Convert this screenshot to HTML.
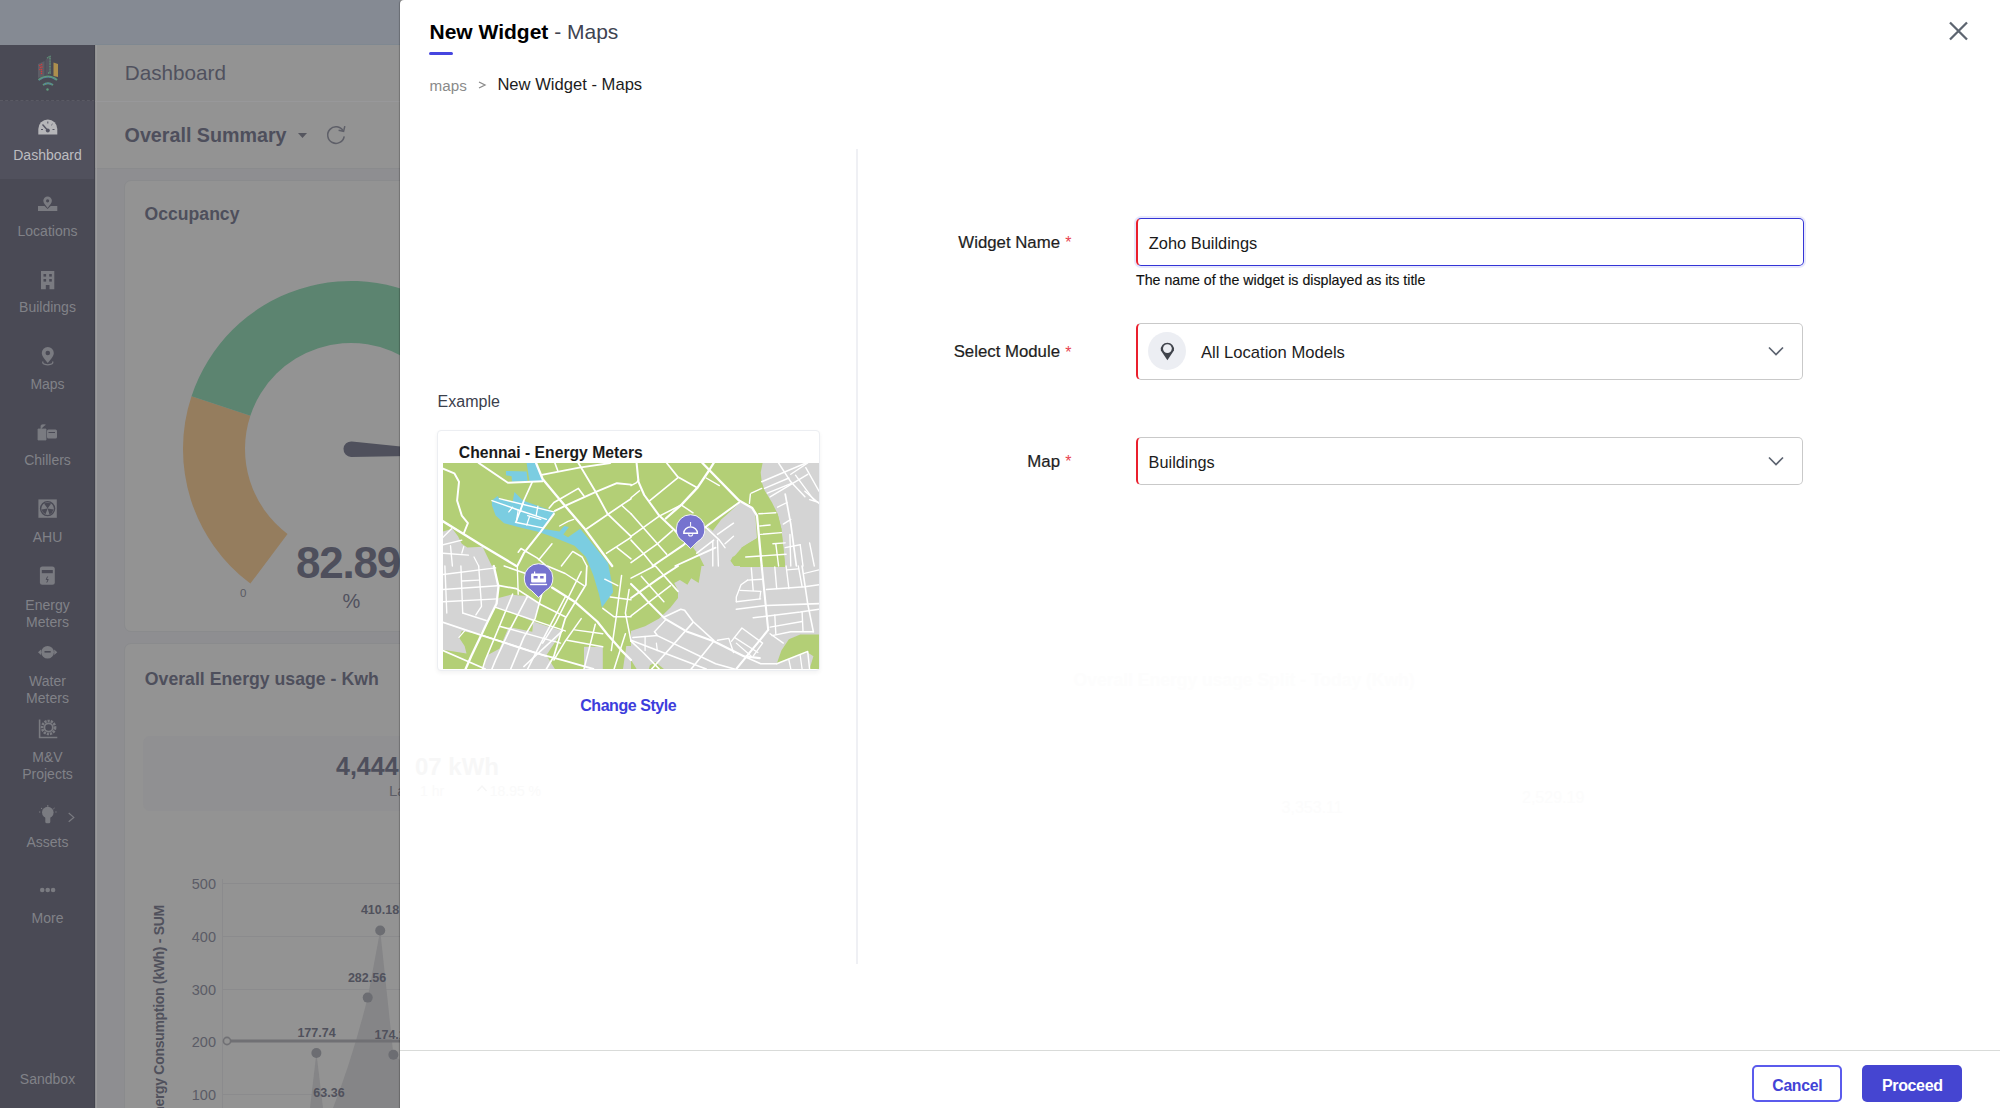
<!DOCTYPE html>
<html><head><meta charset="utf-8"><title>New Widget - Maps</title>
<style>
html,body{margin:0;padding:0;}
body{width:2000px;height:1108px;position:relative;overflow:hidden;background:#939393;font-family:"Liberation Sans", sans-serif;}
.t{position:absolute;white-space:nowrap;}
svg{position:absolute;overflow:visible;}
</style></head><body>

<div style="position:absolute;left:0px;top:0px;width:400px;height:45px;background:#858a93;"></div>
<div style="position:absolute;left:95px;top:44px;width:305px;height:1px;background:#7f8891;"></div>
<div style="position:absolute;left:0px;top:45px;width:95px;height:1063px;background:#4a4a55;"></div>
<div style="position:absolute;left:0px;top:45px;width:95px;height:56px;background:#4a4a55;border-bottom:1px dashed #5a5a64;box-sizing:border-box;"></div>
<div style="position:absolute;left:0px;top:101px;width:95px;height:78px;background:#51515d;"></div>
<div style="position:absolute;left:94px;top:45px;width:1px;height:1063px;background:#42434d;"></div>
<div style="position:absolute;left:95px;top:45px;width:305px;height:124px;background:#939393;"></div>
<div style="position:absolute;left:95px;top:101px;width:305px;height:1px;background:#98989a;"></div>
<div style="position:absolute;left:95px;top:168px;width:305px;height:1px;background:#8a8b8d;"></div>
<div style="position:absolute;left:95px;top:169px;width:305px;height:939px;background:#8e8e91;"></div>
<div style="position:absolute;left:96px;top:45px;width:1px;height:1063px;background:#9a9a9b;"></div>
<div style="position:absolute;left:124px;top:180px;width:300px;height:452px;background:#939393;border:1px solid #8a8b8d;border-radius:7px;box-sizing:border-box;"></div>
<div style="position:absolute;left:124px;top:643px;width:300px;height:500px;background:#939393;border:1px solid #8a8b8d;border-radius:7px;box-sizing:border-box;"></div>
<div style="position:absolute;left:143px;top:736px;width:280px;height:75px;background:#909092;border-radius:7px;"></div>
<div class="t" style="left:124.8px;top:63.0px;font-size:20.7px;line-height:20.7px;color:#50515e;font-weight:normal;">Dashboard</div>
<div class="t" style="left:124.6px;top:126.1px;font-size:19.7px;line-height:19.7px;color:#4e4f5c;font-weight:bold;">Overall Summary</div>
<svg style="left:296px;top:130px" width="14" height="10"><path d="M2 3 L11 3 L6.5 8 Z" fill="#55565f"/></svg>
<svg style="left:324px;top:123px" width="26" height="26"><path d="M19.2 7.9 A8.3 8.3 0 1 0 20.2 13.4" fill="none" stroke="#5e5f68" stroke-width="1.5"/><path d="M20.8 3.2 L19.6 8.3 L14.6 7.3" fill="none" stroke="#5e5f68" stroke-width="1.5"/></svg>
<div class="t" style="left:144.6px;top:206.3px;font-size:17.6px;line-height:17.6px;color:#4e4f5c;font-weight:bold;">Occupancy</div>
<svg style="left:0;top:0" width="400" height="1108"><path d="M250.36 583.52 A168 168 0 0 1 191.50 396.25 L250.36 415.72 A106 106 0 0 0 287.50 533.88Z" fill="#957d5e"/><path d="M191.50 396.25 A168 168 0 1 1 451.64 583.52 L414.50 533.88 A106 106 0 1 0 250.36 415.72Z" fill="#5c8470"/><path d="M351.84 441.41 L481.38 454.87 L351.16 456.99 A7.8 7.8 0 1 1 351.84 441.41 Z" fill="#4f505c"/></svg>
<div class="t" style="left:296.0px;top:540.8px;font-size:44px;line-height:44px;color:#4e4f5c;font-weight:bold;letter-spacing:-1.2px;">82.89</div>
<div class="t" style="left:51.5px;width:600px;text-align:center;top:591.1px;font-size:20px;line-height:20px;color:#50515e;font-weight:normal;">%</div>
<div class="t" style="left:-56.8px;width:600px;text-align:center;top:588.3px;font-size:11.5px;line-height:11.5px;color:#5a5b64;font-weight:normal;">0</div>
<div class="t" style="left:144.8px;top:670.6px;font-size:17.7px;line-height:17.7px;color:#4e4f5c;font-weight:bold;">Overall Energy usage - Kwh</div>
<div class="t" style="left:336.0px;top:754.1px;font-size:25px;line-height:25px;color:#4e4f5c;font-weight:bold;">4,444</div>
<div class="t" style="left:389.0px;top:783.3px;font-size:15px;line-height:15px;color:#5c5d66;font-weight:normal;">La</div>
<svg style="left:0;top:0" width="400" height="1108"><g stroke="#8b8b8d" stroke-width="1"><line x1="222.5" y1="879" x2="222.5" y2="1108"/><line x1="223" y1="883.5" x2="400" y2="883.5"/><line x1="223" y1="936.5" x2="400" y2="936.5"/><line x1="223" y1="989.5" x2="400" y2="989.5"/><line x1="223" y1="1094.5" x2="400" y2="1094.5"/></g><path d="M310 1108 L316.4 1053 L323 1108 Z" fill="#858587"/><path d="M333 1108 Q352 1060 367.7 997.6 L380.2 930.5 L393.4 1054.7 L400 1060 L400 1108 Z" fill="#858587"/><line x1="231" y1="1041" x2="400" y2="1041" stroke="#707074" stroke-width="3"/><circle cx="227" cy="1041" r="3.6" fill="#939393" stroke="#707074" stroke-width="1.6"/><g fill="#6c6d72"><circle cx="316.4" cy="1053" r="5"/><circle cx="367.7" cy="997.6" r="5"/><circle cx="380.2" cy="930.5" r="5"/><circle cx="393.4" cy="1054.7" r="5"/></g></svg>
<div class="t" style="right:1784.0px;top:876.7px;font-size:14.5px;line-height:14.5px;color:#5b5c66;font-weight:normal;">500</div>
<div class="t" style="right:1784.0px;top:929.7px;font-size:14.5px;line-height:14.5px;color:#5b5c66;font-weight:normal;">400</div>
<div class="t" style="right:1784.0px;top:982.7px;font-size:14.5px;line-height:14.5px;color:#5b5c66;font-weight:normal;">300</div>
<div class="t" style="right:1784.0px;top:1034.7px;font-size:14.5px;line-height:14.5px;color:#5b5c66;font-weight:normal;">200</div>
<div class="t" style="right:1784.0px;top:1087.7px;font-size:14.5px;line-height:14.5px;color:#5b5c66;font-weight:normal;">100</div>
<div class="t" style="left:16.5px;width:600px;text-align:center;top:1027.4px;font-size:12.5px;line-height:12.5px;color:#50515c;font-weight:bold;">177.74</div>
<div class="t" style="left:67.0px;width:600px;text-align:center;top:972.4px;font-size:12.5px;line-height:12.5px;color:#50515c;font-weight:bold;">282.56</div>
<div class="t" style="left:80.0px;width:600px;text-align:center;top:904.4px;font-size:12.5px;line-height:12.5px;color:#50515c;font-weight:bold;">410.18</div>
<div class="t" style="left:374.5px;top:1029.4px;font-size:12.5px;line-height:12.5px;color:#50515c;font-weight:bold;">174.1</div>
<div class="t" style="left:29.0px;width:600px;text-align:center;top:1087.4px;font-size:12.5px;line-height:12.5px;color:#50515c;font-weight:bold;">63.36</div>
<div class="t" style="left:151px;top:905px;font-size:14px;line-height:16px;letter-spacing:-0.3px;color:#50515c;font-weight:bold;transform-origin:0 0;transform:rotate(-90deg) translate(-300px,0);width:300px;text-align:right;">Energy Consumption (kWh) - SUM</div>
<div class="t" style="left:-252.5px;width:600px;text-align:center;top:147.6px;font-size:14px;line-height:14px;color:#bdbdc0;font-weight:normal;">Dashboard</div>
<div class="t" style="left:-252.5px;width:600px;text-align:center;top:224.0px;font-size:14px;line-height:14px;color:#818288;font-weight:normal;">Locations</div>
<div class="t" style="left:-252.5px;width:600px;text-align:center;top:300.4px;font-size:14px;line-height:14px;color:#818288;font-weight:normal;">Buildings</div>
<div class="t" style="left:-252.5px;width:600px;text-align:center;top:376.8px;font-size:14px;line-height:14px;color:#818288;font-weight:normal;">Maps</div>
<div class="t" style="left:-252.5px;width:600px;text-align:center;top:453.2px;font-size:14px;line-height:14px;color:#818288;font-weight:normal;">Chillers</div>
<div class="t" style="left:-252.5px;width:600px;text-align:center;top:529.6px;font-size:14px;line-height:14px;color:#818288;font-weight:normal;">AHU</div>
<div class="t" style="left:-252.5px;width:600px;text-align:center;top:598.1px;font-size:14px;line-height:14px;color:#818288;font-weight:normal;">Energy</div>
<div class="t" style="left:-252.5px;width:600px;text-align:center;top:614.8px;font-size:14px;line-height:14px;color:#818288;font-weight:normal;">Meters</div>
<div class="t" style="left:-252.5px;width:600px;text-align:center;top:673.6px;font-size:14px;line-height:14px;color:#818288;font-weight:normal;">Water</div>
<div class="t" style="left:-252.5px;width:600px;text-align:center;top:690.6px;font-size:14px;line-height:14px;color:#818288;font-weight:normal;">Meters</div>
<div class="t" style="left:-252.5px;width:600px;text-align:center;top:750.2px;font-size:14px;line-height:14px;color:#818288;font-weight:normal;">M&amp;V</div>
<div class="t" style="left:-252.5px;width:600px;text-align:center;top:767.2px;font-size:14px;line-height:14px;color:#818288;font-weight:normal;">Projects</div>
<div class="t" style="left:-252.5px;width:600px;text-align:center;top:835.4px;font-size:14px;line-height:14px;color:#818288;font-weight:normal;">Assets</div>
<div class="t" style="left:-252.5px;width:600px;text-align:center;top:911.3px;font-size:14px;line-height:14px;color:#818288;font-weight:normal;">More</div>
<div class="t" style="left:-252.5px;width:600px;text-align:center;top:1071.6px;font-size:14px;line-height:14px;color:#818288;font-weight:normal;">Sandbox</div>
<svg style="left:0;top:0" width="95" height="1108"><g><path d="M38 64 L44.5 61 L44.5 76 L38 78 Z" fill="#5d5d66"/><g fill="#d33b3b"><circle cx="39.8" cy="65.5" r="0.8"/><circle cx="41.5" cy="64.5" r="0.8"/><circle cx="40.5" cy="67.5" r="0.8"/><circle cx="42" cy="67" r="0.8"/><circle cx="39.8" cy="69.5" r="0.8"/><circle cx="41.5" cy="69.5" r="0.8"/><circle cx="41.5" cy="71.5" r="0.8"/><circle cx="41.5" cy="73.5" r="0.8"/></g><path d="M45.5 60 L49 55.5 L51 56 L51 74 L45.5 75 Z" fill="#555560"/><path d="M47 58 L50 56.5 L50 73 L47.5 73" fill="none" stroke="#5f9b7b" stroke-width="1.3" stroke-dasharray="1 0.6"/><path d="M53.5 62.5 L58 64 L58 77 L53.5 76 Z" fill="#ad8f4e"/><path d="M38.5 80 Q48 73 57 80" fill="none" stroke="#5f9b7b" stroke-width="2"/><path d="M39.5 80 Q48 74.5 56 80" fill="none" stroke="#4b5fd0" stroke-width="0.9" stroke-dasharray="1 1.6"/><path d="M43 85 Q48 81.5 53 85" fill="none" stroke="#5f9b7b" stroke-width="1.8"/><path d="M44 84.5 Q48 82 52 84.5" fill="none" stroke="#4b5fd0" stroke-width="0.9" stroke-dasharray="1 1.4"/><circle cx="47.5" cy="89.5" r="1.2" fill="#5f9b7b"/></g><path d="M38.3 134.5 L38.3 129 A9.5 9.5 0 0 1 57.3 129 L57.3 134.5 Z" fill="#b6b6b9"/><circle cx="47.8" cy="130.5" r="2" fill="#555563"/><path d="M47.8 130.5 L42.5 124.5" stroke="#555563" stroke-width="1.4"/><path d="M47.8 121.5 V123.5 M41 129.5 H43 M52.5 129.5 H54.5 M52.5 124 L51.3 125.2" stroke="#555563" stroke-width="1"/><path d="M47.6 196.5 A4.3 4.3 0 0 1 51.9 200.8 C51.9 203 49.5 205.5 47.6 208 C45.7 205.5 43.3 203 43.3 200.8 A4.3 4.3 0 0 1 47.6 196.5 Z" fill="#7a7b81"/><circle cx="47.6" cy="200.8" r="1.6" fill="#4a4a55"/><path d="M38 206 H44.5 L47.6 209 L50.7 206 H57.3 V211 H38 Z" fill="#7a7b81"/><path d="M41 271 H54.3 V289.3 H49.5 V285 H45.8 V289.3 H41 Z" fill="#7a7b81"/><g fill="#4a4a55"><rect x="43.5" y="274" width="2.6" height="2.6"/><rect x="49.2" y="274" width="2.6" height="2.6"/><rect x="43.5" y="279" width="2.6" height="2.6"/><rect x="49.2" y="279" width="2.6" height="2.6"/></g><path d="M47.8 347 A6 6 0 0 1 53.8 353 C53.8 356.5 50.5 359.5 47.8 363 C45.1 359.5 41.8 356.5 41.8 353 A6 6 0 0 1 47.8 347 Z" fill="#7a7b81"/><circle cx="47.8" cy="353" r="2.3" fill="#4a4a55"/><path d="M43 361.5 Q41.5 364.5 47.8 364.8 Q54 364.5 52.6 361.5" fill="none" stroke="#7a7b81" stroke-width="1.3"/><path d="M38 429 H46 V440 H38 Z M41 429 V426 Q41 424.8 42.5 424.8 H45.5" fill="#7a7b81" stroke="#7a7b81" stroke-width="0.8"/><rect x="47" y="429.5" width="10" height="9" rx="1.5" fill="#7a7b81"/><path d="M48.5 432.5 H55" stroke="#4a4a55" stroke-width="1"/><rect x="38.4" y="499.4" width="18.4" height="18.4" fill="#7a7b81"/><circle cx="47.6" cy="508.6" r="7" fill="none" stroke="#4a4a55" stroke-width="1.4"/><path d="M47.6 508.6 L44 503.5 Q47.6 502 51.2 503.5 Z M47.6 508.6 L53.6 509.5 Q52.5 513 49.5 514.5 Z M47.6 508.6 L45.5 514.3 Q42 512.5 41.6 509.5 Z" fill="#4a4a55"/><rect x="39.9" y="566.5" width="14.9" height="18.3" rx="2.5" fill="#7a7b81"/><rect x="41.8" y="570" width="11" height="3.2" fill="#4a4a55"/><path d="M47.6 576.5 L46.2 579.5 H48.2 L46.8 582.5" fill="none" stroke="#4a4a55" stroke-width="1"/><circle cx="47.6" cy="652.2" r="6.3" fill="#7a7b81"/><path d="M38 652.2 L41 649.5 V655 Z M57.3 652.2 L54.2 649.5 V655 Z" fill="#7a7b81"/><rect x="44.5" y="651" width="6.2" height="1.6" fill="#4a4a55"/><path d="M39.6 719.4 V737.5 H57.3" fill="none" stroke="#7a7b81" stroke-width="1.6"/><circle cx="48.6" cy="727.5" r="6.5" fill="none" stroke="#7a7b81" stroke-width="2.6" stroke-dasharray="2.2 1"/><circle cx="48.6" cy="727.5" r="4.2" fill="none" stroke="#7a7b81" stroke-width="1.8"/><circle cx="47.8" cy="812.5" r="5.8" fill="#7a7b81"/><rect x="45.3" y="816" width="5" height="7.3" rx="1.5" fill="#7a7b81"/><path d="M47.8 805 V806.8 M41 808 L42.3 809 M54.6 808 L53.3 809 M39 812 H40.3 M56.6 812 H55.3" stroke="#7a7b81" stroke-width="1"/><path d="M68.7 813 L73.8 817.4 L68.7 821.8" fill="none" stroke="#7a7b81" stroke-width="1.2"/><g fill="#7a7b81"><circle cx="42.2" cy="890" r="2.3"/><circle cx="47.7" cy="890" r="2.3"/><circle cx="53.1" cy="890" r="2.3"/></g></svg>
<div style="position:absolute;left:400px;top:0px;width:1600px;height:1108px;background:#fff;border-top-left-radius:4px;box-shadow:-1px 0 1px rgba(0,0,0,0.22);"></div>
<div class="t" style="left:429.5px;top:21.2px;font-size:21px;line-height:21px;color:#000;"><b>New Widget</b><span style="color:#3f4451;"> - Maps</span></div>
<div style="position:absolute;left:429px;top:52px;width:24px;height:3px;background:#4646e0;border-radius:2px;"></div>
<div class="t" style="left:429.6px;top:78.1px;font-size:15.2px;line-height:15.2px;color:#8a8a8a;font-weight:normal;">maps</div>
<svg style="left:477px;top:80px" width="10" height="10"><path d="M2 2 L8 5 L2 8" fill="none" stroke="#8a8a8a" stroke-width="1.3"/></svg>
<div class="t" style="left:497.4px;top:77.1px;font-size:16.6px;line-height:16.6px;color:#1c1c1c;font-weight:normal;">New Widget - Maps</div>
<svg style="left:1946px;top:19px" width="24" height="24"><path d="M4 3.5 L21 20.5 M21 3.5 L4 20.5" stroke="#5d6570" stroke-width="2.3"/></svg>
<div style="position:absolute;left:856px;top:149px;width:2px;height:815px;background:#eff0f4;"></div>
<div class="t" style="left:437.6px;top:394.1px;font-size:16px;line-height:16px;color:#3b404c;font-weight:normal;">Example</div>
<div style="position:absolute;left:437px;top:430px;width:383px;height:241px;background:#fff;border:1px solid #eceef2;border-radius:4px;box-sizing:border-box;box-shadow:0 2px 4px rgba(0,0,0,0.05);"></div>
<div class="t" style="left:458.8px;top:444.5px;font-size:15.7px;line-height:15.7px;color:#1a1a1a;font-weight:bold;">Chennai - Energy Meters</div>
<svg style="left:443px;top:463px" width="376" height="206" viewBox="0 0 376 206"><defs><clipPath id="mc"><rect width="376" height="206"/></clipPath></defs><g clip-path="url(#mc)"><rect width="376" height="206" fill="#b3cf76"/><polygon fill="#d4d4d4" points="0.0,68.6 9.4,65.8 15.0,73.3 18.8,80.8 24.4,84.6 39.5,83.7 48.9,103.0 51.2,103.0 55.5,123.7 54.0,140.6 44.2,159.4 36.7,171.6 18.8,167.9 16.0,174.4 21.6,182.9 23.5,190.4 0.0,186.7"/><polygon fill="#d4d4d4" points="55.5,135.0 67.7,131.7 84.6,133.1 96.8,141.5 90.2,158.5 63.9,148.1 52.6,144.4"/><polygon fill="#d4d4d4" points="90.2,158.5 119.4,167.9 103.4,192.3 111.9,206.0 40.4,206.0 44.2,192.3 56.4,185.7 65.8,164.1 89.3,168.8"/><polygon fill="#d4d4d4" points="141.0,183.8 159.8,183.8 159.8,206.0 141.0,206.0"/><polygon fill="#d4d4d4" points="183.3,182.9 188.0,182.9 188.0,206.0 180.0,206.0"/><polygon fill="#d4d4d4" points="319.6,0.0 376.0,0.0 376.0,103.0 342.2,103.0 338.4,65.8 334.6,50.8 329.0,39.5 321.5,27.3 318.7,18.8 317.7,9.4"/><polygon fill="#d4d4d4" points="265.1,63.9 269.8,67.7 278.2,56.4 284.8,50.8 297.0,39.5 306.4,42.3 312.1,48.9 314.0,75.2 304.6,80.8 298.9,84.6 297.0,90.2 289.5,94.0 287.6,97.8 291.4,103.0 261.3,103.0 255.7,92.1 250.0,84.6"/><polygon fill="#d4d4d4" points="188.0,103.0 376.0,103.0 376.0,206.0 188.0,206.0"/><polygon fill="#b3cf76" points="188.0,103.0 258.5,103.0 255.7,119.9 248.2,115.2 244.4,121.8 236.9,117.1 231.2,119.9 235.0,127.4 235.0,135.0 227.5,144.4 216.2,155.6 202.1,163.2 188.0,167.9"/><polygon fill="#b3cf76" points="297.0,103.0 317.7,103.0 317.7,104.0 297.0,104.0"/><polygon fill="#b3cf76" points="333.7,200.8 338.4,187.6 345.9,176.3 357.2,171.6 376.0,171.6 376.0,206.0 366.6,206.0 370.4,193.2 364.7,189.5"/><polygon fill="#b3cf76" points="188.0,197.0 193.6,206.0 188.0,206.0"/><polygon fill="#b3cf76" points="206.8,202.6 212.4,198.9 220.9,206.0 205.9,206.0"/><polygon fill="#b3cf76" points="315.8,48.9 334.6,50.8 338.4,65.8 342.2,103.0 342.2,104.0 318.7,104.0 314.0,75.2"/><polygon fill="#b3cf76" points="287.6,97.8 298.9,84.6 314.0,75.2 316.0,103.0 291.4,103.0"/><polygon fill="#7bcde1" points="48.9,37.6 54.5,32.9 56.4,35.7 69.5,39.5 71.4,29.1 79.9,37.6 111.8,48.9 106.2,58.3 99.6,65.8 116.5,68.6 121.2,63.0 125.9,63.9 120.3,71.4 125.0,74.2 137.2,65.8 165.0,100.0 169.2,121.8 170.1,129.3 158.9,144.4 156.0,131.2 150.4,112.4 146.6,103.0 142.9,94.0 131.6,82.7 108.1,73.3 94.0,68.6 75.2,63.9 61.1,60.2 52.6,52.6 48.9,42.3"/><polygon fill="#7bcde1" points="83.6,0.0 93.0,0.0 99.6,17.9 86.5,17.9"/><polygon fill="#7bcde1" points="63.0,8.0 83.6,8.5 84.6,18.3 69.0,18.8 68.6,13.2 63.0,12.2"/><polyline fill="none" stroke="#fff" stroke-width="1.95" stroke-linejoin="round" stroke-linecap="round" points="35.7,0.0 64.9,19.7 99.6,18.3"/><polyline fill="none" stroke="#fff" stroke-width="1.95" stroke-linejoin="round" stroke-linecap="round" points="0.0,5.6 11.3,10.3 16.0,18.8 14.1,37.6 18.8,52.6 24.9,60.2 20.7,70.5"/><polyline fill="none" stroke="#fff" stroke-width="2.30" stroke-linejoin="round" stroke-linecap="round" points="0.0,58.3 39.5,82.7 73.3,103.0"/><polyline fill="none" stroke="#fff" stroke-width="2.30" stroke-linejoin="round" stroke-linecap="round" points="93.1,0.0 99.6,16.0 117.5,37.6 141.0,64.9 169.2,103.0"/><polyline fill="none" stroke="#fff" stroke-width="1.84" stroke-linejoin="round" stroke-linecap="round" points="98.7,11.8 136.3,4.7 167.3,0.0"/><polyline fill="none" stroke="#fff" stroke-width="1.61" stroke-linejoin="round" stroke-linecap="round" points="111.9,0.0 114.7,7.5"/><polyline fill="none" stroke="#fff" stroke-width="1.84" stroke-linejoin="round" stroke-linecap="round" points="135.4,0.0 152.3,28.2 164.5,50.8 188.0,73.3"/><polyline fill="none" stroke="#fff" stroke-width="1.61" stroke-linejoin="round" stroke-linecap="round" points="106.2,45.1 110.9,39.5 117.5,35.7 135.4,25.4 141.0,32.9"/><polyline fill="none" stroke="#fff" stroke-width="1.95" stroke-linejoin="round" stroke-linecap="round" points="111.9,47.9 123.1,42.3 152.3,29.1 173.9,20.2 188.0,21.6"/><polyline fill="none" stroke="#fff" stroke-width="1.61" stroke-linejoin="round" stroke-linecap="round" points="89.3,18.8 80.8,37.6 73.3,58.3"/><polyline fill="none" stroke="#fff" stroke-width="1.38" stroke-linejoin="round" stroke-linecap="round" points="48.9,37.6 75.2,47.0 103.4,56.4"/><polyline fill="none" stroke="#fff" stroke-width="1.38" stroke-linejoin="round" stroke-linecap="round" points="56.4,35.7 110.9,48.9"/><polyline fill="none" stroke="#fff" stroke-width="1.38" stroke-linejoin="round" stroke-linecap="round" points="72.4,59.2 99.6,64.9"/><polyline fill="none" stroke="#fff" stroke-width="1.26" stroke-linejoin="round" stroke-linecap="round" points="84.6,52.6 97.8,56.4"/><polyline fill="none" stroke="#fff" stroke-width="1.26" stroke-linejoin="round" stroke-linecap="round" points="94.9,43.2 93.1,52.6"/><polyline fill="none" stroke="#fff" stroke-width="1.26" stroke-linejoin="round" stroke-linecap="round" points="86.5,53.6 83.7,62.0"/><polyline fill="none" stroke="#fff" stroke-width="1.26" stroke-linejoin="round" stroke-linecap="round" points="75.2,47.0 73.3,59.2"/><polyline fill="none" stroke="#fff" stroke-width="1.26" stroke-linejoin="round" stroke-linecap="round" points="65.8,48.9 69.6,44.2"/><polyline fill="none" stroke="#fff" stroke-width="1.26" stroke-linejoin="round" stroke-linecap="round" points="80.8,38.5 77.1,48.9"/><polyline fill="none" stroke="#fff" stroke-width="2.07" stroke-linejoin="round" stroke-linecap="round" points="110.9,50.8 97.8,68.6 80.8,90.2 74.3,103.0"/><polyline fill="none" stroke="#fff" stroke-width="1.72" stroke-linejoin="round" stroke-linecap="round" points="143.8,65.8 179.5,41.4 188.0,35.7"/><polyline fill="none" stroke="#fff" stroke-width="1.61" stroke-linejoin="round" stroke-linecap="round" points="163.6,90.2 188.0,74.3"/><polyline fill="none" stroke="#fff" stroke-width="1.49" stroke-linejoin="round" stroke-linecap="round" points="173.9,84.6 188.0,95.9"/><polyline fill="none" stroke="#fff" stroke-width="1.49" stroke-linejoin="round" stroke-linecap="round" points="178.6,42.3 188.0,50.8"/><polyline fill="none" stroke="#fff" stroke-width="1.38" stroke-linejoin="round" stroke-linecap="round" points="116.6,63.0 125.0,58.3 130.7,56.4"/><polyline fill="none" stroke="#fff" stroke-width="1.49" stroke-linejoin="round" stroke-linecap="round" points="75.2,89.3 78.0,85.5 94.0,94.9 103.4,103.0"/><polyline fill="none" stroke="#fff" stroke-width="1.49" stroke-linejoin="round" stroke-linecap="round" points="95.9,96.8 109.0,80.8"/><polyline fill="none" stroke="#fff" stroke-width="1.49" stroke-linejoin="round" stroke-linecap="round" points="118.4,103.0 129.7,88.4 139.1,94.0 143.8,103.0"/><polyline fill="none" stroke="#fff" stroke-width="1.38" stroke-linejoin="round" stroke-linecap="round" points="0.0,74.3 8.5,65.8"/><polyline fill="none" stroke="#fff" stroke-width="1.38" stroke-linejoin="round" stroke-linecap="round" points="0.0,81.8 18.8,77.1"/><polyline fill="none" stroke="#fff" stroke-width="1.38" stroke-linejoin="round" stroke-linecap="round" points="7.5,82.7 9.4,103.0"/><polyline fill="none" stroke="#fff" stroke-width="1.38" stroke-linejoin="round" stroke-linecap="round" points="0.0,90.2 25.4,92.1"/><polyline fill="none" stroke="#fff" stroke-width="1.26" stroke-linejoin="round" stroke-linecap="round" points="18.8,90.2 20.7,83.7"/><polyline fill="none" stroke="#fff" stroke-width="1.26" stroke-linejoin="round" stroke-linecap="round" points="31.0,94.0 35.7,103.0"/><polyline fill="none" stroke="#fff" stroke-width="2.07" stroke-linejoin="round" stroke-linecap="round" points="193.6,0.0 195.5,18.8 201.2,32.0 216.2,52.6 232.2,67.7 240.6,77.1"/><polyline fill="none" stroke="#fff" stroke-width="1.72" stroke-linejoin="round" stroke-linecap="round" points="223.7,0.0 235.0,14.1 253.8,24.4"/><polyline fill="none" stroke="#fff" stroke-width="1.49" stroke-linejoin="round" stroke-linecap="round" points="188.0,22.6 193.6,19.7 195.5,16.9"/><polyline fill="none" stroke="#fff" stroke-width="2.30" stroke-linejoin="round" stroke-linecap="round" points="259.4,0.0 296.1,37.6 309.3,45.1 314.0,52.6 318.7,103.0"/><polyline fill="none" stroke="#fff" stroke-width="2.30" stroke-linejoin="round" stroke-linecap="round" points="270.7,0.0 266.0,7.5 254.7,24.4 238.8,41.4 222.8,55.5"/><polyline fill="none" stroke="#fff" stroke-width="1.49" stroke-linejoin="round" stroke-linecap="round" points="188.0,34.8 196.5,27.7"/><polyline fill="none" stroke="#fff" stroke-width="1.61" stroke-linejoin="round" stroke-linecap="round" points="206.8,37.6 235.0,14.6"/><polyline fill="none" stroke="#fff" stroke-width="1.61" stroke-linejoin="round" stroke-linecap="round" points="188.0,73.3 216.2,53.1 238.8,41.8"/><polyline fill="none" stroke="#fff" stroke-width="1.61" stroke-linejoin="round" stroke-linecap="round" points="188.0,99.6 214.3,80.8 229.4,67.7"/><polyline fill="none" stroke="#fff" stroke-width="2.07" stroke-linejoin="round" stroke-linecap="round" points="209.6,103.0 240.6,81.8 265.1,62.0 296.1,39.5"/><polyline fill="none" stroke="#fff" stroke-width="1.72" stroke-linejoin="round" stroke-linecap="round" points="232.2,103.0 253.8,93.1 272.6,84.6"/><polyline fill="none" stroke="#fff" stroke-width="1.49" stroke-linejoin="round" stroke-linecap="round" points="274.5,71.4 290.5,60.2"/><polyline fill="none" stroke="#fff" stroke-width="1.38" stroke-linejoin="round" stroke-linecap="round" points="282.0,80.8 290.5,73.3"/><polyline fill="none" stroke="#fff" stroke-width="1.49" stroke-linejoin="round" stroke-linecap="round" points="253.8,90.2 270.7,77.1"/><polyline fill="none" stroke="#fff" stroke-width="1.61" stroke-linejoin="round" stroke-linecap="round" points="188.0,50.8 223.7,91.2"/><polyline fill="none" stroke="#fff" stroke-width="1.61" stroke-linejoin="round" stroke-linecap="round" points="188.0,77.1 200.2,90.2 210.6,103.0"/><polyline fill="none" stroke="#fff" stroke-width="1.49" stroke-linejoin="round" stroke-linecap="round" points="238.8,42.3 250.0,49.8"/><polyline fill="none" stroke="#fff" stroke-width="1.38" stroke-linejoin="round" stroke-linecap="round" points="263.2,15.0 276.4,22.6"/><polyline fill="none" stroke="#fff" stroke-width="1.49" stroke-linejoin="round" stroke-linecap="round" points="262.3,63.9 276.4,77.1 282.0,84.6"/><polyline fill="none" stroke="#fff" stroke-width="1.38" stroke-linejoin="round" stroke-linecap="round" points="269.8,78.0 269.8,103.0"/><polyline fill="none" stroke="#fff" stroke-width="1.38" stroke-linejoin="round" stroke-linecap="round" points="274.5,77.1 275.4,103.0"/><polyline fill="none" stroke="#fff" stroke-width="1.49" stroke-linejoin="round" stroke-linecap="round" points="318.7,18.8 362.8,0.0"/><polyline fill="none" stroke="#fff" stroke-width="1.38" stroke-linejoin="round" stroke-linecap="round" points="321.5,25.4 345.9,15.0"/><polyline fill="none" stroke="#fff" stroke-width="1.38" stroke-linejoin="round" stroke-linecap="round" points="324.3,30.1 347.8,20.7"/><polyline fill="none" stroke="#fff" stroke-width="1.49" stroke-linejoin="round" stroke-linecap="round" points="327.1,33.8 364.7,11.3"/><polyline fill="none" stroke="#fff" stroke-width="1.38" stroke-linejoin="round" stroke-linecap="round" points="347.8,11.3 364.7,0.0"/><polyline fill="none" stroke="#fff" stroke-width="1.38" stroke-linejoin="round" stroke-linecap="round" points="334.6,44.2 344.0,39.5"/><polyline fill="none" stroke="#fff" stroke-width="1.38" stroke-linejoin="round" stroke-linecap="round" points="340.3,61.1 347.8,56.4"/><polyline fill="none" stroke="#fff" stroke-width="1.38" stroke-linejoin="round" stroke-linecap="round" points="342.2,84.6 357.2,81.8"/><polyline fill="none" stroke="#fff" stroke-width="1.49" stroke-linejoin="round" stroke-linecap="round" points="335.6,0.0 347.8,18.8 361.9,33.8"/><polyline fill="none" stroke="#fff" stroke-width="1.38" stroke-linejoin="round" stroke-linecap="round" points="352.5,12.2 371.3,37.6"/><polyline fill="none" stroke="#fff" stroke-width="1.38" stroke-linejoin="round" stroke-linecap="round" points="362.8,4.7 376.0,28.2"/><polyline fill="none" stroke="#fff" stroke-width="1.72" stroke-linejoin="round" stroke-linecap="round" points="342.2,31.0 347.8,61.1 353.4,103.0"/><polyline fill="none" stroke="#fff" stroke-width="1.38" stroke-linejoin="round" stroke-linecap="round" points="361.9,28.2 376.0,40.4"/><polyline fill="none" stroke="#fff" stroke-width="1.38" stroke-linejoin="round" stroke-linecap="round" points="346.9,71.4 347.8,103.0"/><polyline fill="none" stroke="#fff" stroke-width="1.38" stroke-linejoin="round" stroke-linecap="round" points="357.2,81.8 360.0,103.0"/><polyline fill="none" stroke="#fff" stroke-width="1.38" stroke-linejoin="round" stroke-linecap="round" points="366.6,79.9 371.3,103.0"/><polyline fill="none" stroke="#fff" stroke-width="1.38" stroke-linejoin="round" stroke-linecap="round" points="366.6,36.7 376.0,39.5"/><polyline fill="none" stroke="#fff" stroke-width="1.38" stroke-linejoin="round" stroke-linecap="round" points="315.8,50.8 332.8,49.8"/><polyline fill="none" stroke="#fff" stroke-width="1.38" stroke-linejoin="round" stroke-linecap="round" points="316.8,63.0 327.1,62.0"/><polyline fill="none" stroke="#fff" stroke-width="1.38" stroke-linejoin="round" stroke-linecap="round" points="317.7,71.4 338.4,69.6"/><polyline fill="none" stroke="#fff" stroke-width="1.38" stroke-linejoin="round" stroke-linecap="round" points="302.7,94.0 343.1,91.2"/><polyline fill="none" stroke="#fff" stroke-width="1.38" stroke-linejoin="round" stroke-linecap="round" points="329.9,80.8 342.2,79.9"/><polyline fill="none" stroke="#fff" stroke-width="1.38" stroke-linejoin="round" stroke-linecap="round" points="332.8,80.8 335.6,103.0"/><polyline fill="none" stroke="#fff" stroke-width="1.38" stroke-linejoin="round" stroke-linecap="round" points="308.3,30.1 318.7,25.4"/><polyline fill="none" stroke="#fff" stroke-width="1.38" stroke-linejoin="round" stroke-linecap="round" points="307.4,31.0 306.4,40.4"/><polyline fill="none" stroke="#fff" stroke-width="1.38" stroke-linejoin="round" stroke-linecap="round" points="1.9,103.0 3.8,150.0"/><polyline fill="none" stroke="#fff" stroke-width="1.38" stroke-linejoin="round" stroke-linecap="round" points="17.9,103.0 19.7,150.0"/><polyline fill="none" stroke="#fff" stroke-width="1.38" stroke-linejoin="round" stroke-linecap="round" points="35.7,103.0 38.5,143.4 32.9,151.9"/><polyline fill="none" stroke="#fff" stroke-width="1.38" stroke-linejoin="round" stroke-linecap="round" points="0.0,111.5 52.6,104.9"/><polyline fill="none" stroke="#fff" stroke-width="1.38" stroke-linejoin="round" stroke-linecap="round" points="0.0,126.5 54.5,122.7"/><polyline fill="none" stroke="#fff" stroke-width="1.38" stroke-linejoin="round" stroke-linecap="round" points="0.0,138.7 54.5,135.9"/><polyline fill="none" stroke="#fff" stroke-width="1.38" stroke-linejoin="round" stroke-linecap="round" points="19.7,150.0 43.2,157.5"/><polyline fill="none" stroke="#fff" stroke-width="1.26" stroke-linejoin="round" stroke-linecap="round" points="18.8,118.0 35.7,117.1"/><polyline fill="none" stroke="#fff" stroke-width="2.30" stroke-linejoin="round" stroke-linecap="round" points="50.8,103.0 55.5,123.7 53.6,140.6 44.2,159.4 28.2,193.2 22.6,206.0"/><polyline fill="none" stroke="#fff" stroke-width="1.84" stroke-linejoin="round" stroke-linecap="round" points="0.0,159.4 39.5,172.6 94.0,190.4 122.2,197.9 150.4,206.0"/><polyline fill="none" stroke="#fff" stroke-width="1.61" stroke-linejoin="round" stroke-linecap="round" points="0.0,187.6 42.3,206.0"/><polyline fill="none" stroke="#fff" stroke-width="1.72" stroke-linejoin="round" stroke-linecap="round" points="56.4,122.7 73.3,125.6 97.8,141.5 122.2,153.8"/><polyline fill="none" stroke="#fff" stroke-width="1.49" stroke-linejoin="round" stroke-linecap="round" points="61.1,103.0 82.7,110.5"/><polyline fill="none" stroke="#fff" stroke-width="1.38" stroke-linejoin="round" stroke-linecap="round" points="74.3,103.0 75.2,131.2"/><polyline fill="none" stroke="#fff" stroke-width="1.49" stroke-linejoin="round" stroke-linecap="round" points="104.3,103.0 122.2,110.5 141.0,122.7"/><polyline fill="none" stroke="#fff" stroke-width="2.30" stroke-linejoin="round" stroke-linecap="round" points="109.0,124.6 131.6,138.7 154.2,158.5 165.4,172.6 178.6,187.6 188.0,197.0"/><polyline fill="none" stroke="#fff" stroke-width="1.61" stroke-linejoin="round" stroke-linecap="round" points="98.7,131.2 92.1,155.6 80.8,174.4 67.7,206.0"/><polyline fill="none" stroke="#fff" stroke-width="1.61" stroke-linejoin="round" stroke-linecap="round" points="84.6,133.1 65.8,168.8 52.6,197.0 48.9,206.0"/><polyline fill="none" stroke="#fff" stroke-width="1.61" stroke-linejoin="round" stroke-linecap="round" points="69.6,131.2 56.4,163.2 42.3,197.0 39.5,206.0"/><polyline fill="none" stroke="#fff" stroke-width="1.61" stroke-linejoin="round" stroke-linecap="round" points="122.2,134.0 94.0,187.6 84.6,206.0"/><polyline fill="none" stroke="#fff" stroke-width="1.49" stroke-linejoin="round" stroke-linecap="round" points="138.2,108.6 112.8,159.4 99.6,180.1"/><polyline fill="none" stroke="#fff" stroke-width="1.49" stroke-linejoin="round" stroke-linecap="round" points="119.4,167.9 94.0,191.4 80.8,203.6"/><polyline fill="none" stroke="#fff" stroke-width="1.72" stroke-linejoin="round" stroke-linecap="round" points="143.8,103.0 142.9,121.8 122.2,155.6 110.9,193.2 103.4,206.0"/><polyline fill="none" stroke="#fff" stroke-width="1.49" stroke-linejoin="round" stroke-linecap="round" points="138.2,155.6 122.2,178.2 110.9,197.0"/><polyline fill="none" stroke="#fff" stroke-width="1.49" stroke-linejoin="round" stroke-linecap="round" points="152.3,161.3 141.0,206.0"/><polyline fill="none" stroke="#fff" stroke-width="1.49" stroke-linejoin="round" stroke-linecap="round" points="182.4,170.7 171.1,206.0"/><polyline fill="none" stroke="#fff" stroke-width="1.49" stroke-linejoin="round" stroke-linecap="round" points="52.6,144.4 122.2,167.9"/><polyline fill="none" stroke="#fff" stroke-width="1.49" stroke-linejoin="round" stroke-linecap="round" points="56.4,163.2 117.5,180.1"/><polyline fill="none" stroke="#fff" stroke-width="1.49" stroke-linejoin="round" stroke-linecap="round" points="40.4,172.6 103.4,193.2"/><polyline fill="none" stroke="#fff" stroke-width="1.49" stroke-linejoin="round" stroke-linecap="round" points="159.8,145.3 171.1,153.8 188.0,153.8"/><polyline fill="none" stroke="#fff" stroke-width="1.49" stroke-linejoin="round" stroke-linecap="round" points="178.6,112.4 173.0,155.6 168.3,187.6"/><polyline fill="none" stroke="#fff" stroke-width="1.38" stroke-linejoin="round" stroke-linecap="round" points="167.3,134.0 188.0,136.8"/><polyline fill="none" stroke="#fff" stroke-width="1.38" stroke-linejoin="round" stroke-linecap="round" points="161.7,116.2 174.8,122.7"/><polyline fill="none" stroke="#fff" stroke-width="1.49" stroke-linejoin="round" stroke-linecap="round" points="186.1,126.5 182.4,150.0 188.0,178.2"/><polyline fill="none" stroke="#fff" stroke-width="1.26" stroke-linejoin="round" stroke-linecap="round" points="16.0,174.4 21.6,167.9"/><polyline fill="none" stroke="#fff" stroke-width="1.38" stroke-linejoin="round" stroke-linecap="round" points="131.6,166.9 159.8,170.7"/><polyline fill="none" stroke="#fff" stroke-width="1.38" stroke-linejoin="round" stroke-linecap="round" points="124.1,177.3 159.8,183.8"/><polyline fill="none" stroke="#fff" stroke-width="1.49" stroke-linejoin="round" stroke-linecap="round" points="188.0,115.2 211.5,103.0"/><polyline fill="none" stroke="#fff" stroke-width="2.07" stroke-linejoin="round" stroke-linecap="round" points="188.0,135.0 216.2,115.2 235.0,103.0"/><polyline fill="none" stroke="#fff" stroke-width="1.49" stroke-linejoin="round" stroke-linecap="round" points="188.0,152.8 227.5,122.7"/><polyline fill="none" stroke="#fff" stroke-width="1.49" stroke-linejoin="round" stroke-linecap="round" points="198.3,113.3 220.9,138.7"/><polyline fill="none" stroke="#fff" stroke-width="1.61" stroke-linejoin="round" stroke-linecap="round" points="212.4,103.0 220.0,111.5 235.0,128.4"/><polyline fill="none" stroke="#fff" stroke-width="2.07" stroke-linejoin="round" stroke-linecap="round" points="188.0,120.9 196.5,129.3 206.8,140.6 221.8,155.6 244.4,168.8 270.7,178.2 300.8,193.2 316.8,195.1"/><polyline fill="none" stroke="#fff" stroke-width="1.61" stroke-linejoin="round" stroke-linecap="round" points="221.8,153.8 237.8,146.2 241.6,147.2 250.0,158.5 270.7,177.3"/><polyline fill="none" stroke="#fff" stroke-width="1.38" stroke-linejoin="round" stroke-linecap="round" points="211.5,168.8 222.8,156.6"/><polyline fill="none" stroke="#fff" stroke-width="1.61" stroke-linejoin="round" stroke-linecap="round" points="211.5,168.8 214.3,172.6 272.6,200.8 291.4,206.0"/><polyline fill="none" stroke="#fff" stroke-width="1.49" stroke-linejoin="round" stroke-linecap="round" points="189.9,174.4 214.3,172.6"/><polyline fill="none" stroke="#fff" stroke-width="1.61" stroke-linejoin="round" stroke-linecap="round" points="188.0,177.3 263.2,206.0"/><polyline fill="none" stroke="#fff" stroke-width="1.61" stroke-linejoin="round" stroke-linecap="round" points="188.0,178.2 200.2,189.5 216.2,206.0"/><polyline fill="none" stroke="#fff" stroke-width="1.26" stroke-linejoin="round" stroke-linecap="round" points="202.1,173.5 202.1,187.6"/><polyline fill="none" stroke="#fff" stroke-width="1.26" stroke-linejoin="round" stroke-linecap="round" points="213.4,180.1 214.3,187.6"/><polyline fill="none" stroke="#fff" stroke-width="1.61" stroke-linejoin="round" stroke-linecap="round" points="250.0,159.4 208.7,206.0"/><polyline fill="none" stroke="#fff" stroke-width="1.61" stroke-linejoin="round" stroke-linecap="round" points="270.7,178.2 248.2,206.0"/><polyline fill="none" stroke="#fff" stroke-width="1.38" stroke-linejoin="round" stroke-linecap="round" points="274.5,177.3 285.8,175.4 290.5,189.5"/><polyline fill="none" stroke="#fff" stroke-width="1.38" stroke-linejoin="round" stroke-linecap="round" points="288.6,178.2 298.9,165.0 319.6,180.1 310.2,193.2"/><polyline fill="none" stroke="#fff" stroke-width="1.26" stroke-linejoin="round" stroke-linecap="round" points="291.4,174.4 314.9,189.5"/><polyline fill="none" stroke="#fff" stroke-width="1.26" stroke-linejoin="round" stroke-linecap="round" points="293.3,180.1 308.3,193.2"/><polyline fill="none" stroke="#fff" stroke-width="2.07" stroke-linejoin="round" stroke-linecap="round" points="325.2,166.9 293.3,206.0"/><polyline fill="none" stroke="#fff" stroke-width="1.38" stroke-linejoin="round" stroke-linecap="round" points="327.1,170.7 340.3,180.1"/><polyline fill="none" stroke="#fff" stroke-width="1.38" stroke-linejoin="round" stroke-linecap="round" points="308.3,104.9 310.2,127.4"/><polyline fill="none" stroke="#fff" stroke-width="2.07" stroke-linejoin="round" stroke-linecap="round" points="318.7,103.0 325.2,166.9"/><polyline fill="none" stroke="#fff" stroke-width="1.38" stroke-linejoin="round" stroke-linecap="round" points="331.8,103.9 333.7,125.6"/><polyline fill="none" stroke="#fff" stroke-width="1.38" stroke-linejoin="round" stroke-linecap="round" points="343.1,103.0 345.9,125.6"/><polyline fill="none" stroke="#fff" stroke-width="1.38" stroke-linejoin="round" stroke-linecap="round" points="355.3,103.0 359.1,123.7"/><polyline fill="none" stroke="#fff" stroke-width="1.61" stroke-linejoin="round" stroke-linecap="round" points="359.1,103.0 364.7,140.6 370.4,168.8"/><polyline fill="none" stroke="#fff" stroke-width="1.38" stroke-linejoin="round" stroke-linecap="round" points="304.6,117.1 319.6,116.2"/><polyline fill="none" stroke="#fff" stroke-width="1.38" stroke-linejoin="round" stroke-linecap="round" points="297.0,127.4 317.7,128.4"/><polyline fill="none" stroke="#fff" stroke-width="1.38" stroke-linejoin="round" stroke-linecap="round" points="293.3,138.7 317.7,135.9"/><polyline fill="none" stroke="#fff" stroke-width="1.61" stroke-linejoin="round" stroke-linecap="round" points="293.3,146.2 323.4,142.5 376.0,140.6"/><polyline fill="none" stroke="#fff" stroke-width="1.49" stroke-linejoin="round" stroke-linecap="round" points="310.2,154.7 357.2,149.1 376.0,146.2"/><polyline fill="none" stroke="#fff" stroke-width="1.38" stroke-linejoin="round" stroke-linecap="round" points="327.1,164.1 359.1,158.5"/><polyline fill="none" stroke="#fff" stroke-width="1.38" stroke-linejoin="round" stroke-linecap="round" points="329.0,172.6 347.8,168.8 370.4,168.8"/><polyline fill="none" stroke="#fff" stroke-width="1.38" stroke-linejoin="round" stroke-linecap="round" points="323.4,126.5 361.9,123.7 376.0,121.8"/><polyline fill="none" stroke="#fff" stroke-width="1.26" stroke-linejoin="round" stroke-linecap="round" points="344.0,106.8 355.3,105.8"/><polyline fill="none" stroke="#fff" stroke-width="1.26" stroke-linejoin="round" stroke-linecap="round" points="361.0,110.5 376.0,106.8"/><polyline fill="none" stroke="#fff" stroke-width="1.38" stroke-linejoin="round" stroke-linecap="round" points="304.6,117.1 298.0,121.8 293.3,134.0 293.3,138.7"/><polyline fill="none" stroke="#fff" stroke-width="1.26" stroke-linejoin="round" stroke-linecap="round" points="317.7,128.4 316.8,135.9"/><polyline fill="none" stroke="#fff" stroke-width="1.38" stroke-linejoin="round" stroke-linecap="round" points="331.8,151.9 332.8,170.7"/><polyline fill="none" stroke="#fff" stroke-width="1.38" stroke-linejoin="round" stroke-linecap="round" points="359.1,149.1 360.0,167.9"/><polyline fill="none" stroke="#fff" stroke-width="1.49" stroke-linejoin="round" stroke-linecap="round" points="333.7,200.8 364.7,188.5 366.6,206.0"/><polyline fill="none" stroke="#fff" stroke-width="1.26" stroke-linejoin="round" stroke-linecap="round" points="345.9,197.0 347.8,206.0"/><polyline fill="none" stroke="#fff" stroke-width="1.26" stroke-linejoin="round" stroke-linecap="round" points="357.2,192.3 359.1,206.0"/><polyline fill="none" stroke="#fff" stroke-width="1.49" stroke-linejoin="round" stroke-linecap="round" points="300.8,193.2 317.7,200.8 333.7,200.8"/></g><g transform="translate(247.6,66)"><path d="M-14.3 0 A14.3 14.3 0 1 1 14.3 0 A14.3 14.3 0 0 1 7 12.6 L0 19.5 L-7 12.6 A14.3 14.3 0 0 1 -14.3 0Z" fill="#7673cf" stroke="#fff" stroke-width="0.9"/><path d="M-6.8 4.2 A6.8 6.3 0 0 1 6.8 4.2 Z" fill="none" stroke="#fff" stroke-width="1.4"/><line x1="0" y1="-7" x2="0" y2="-2.8" stroke="#fff" stroke-width="1"/><path d="M-2 5.2 A2 1.8 0 0 0 2 5.2" fill="none" stroke="#fff" stroke-width="1.2"/></g><g transform="translate(95.6,115)"><path d="M-14.3 0 A14.3 14.3 0 1 1 14.3 0 A14.3 14.3 0 0 1 7 12.6 L0 19.5 L-7 12.6 A14.3 14.3 0 0 1 -14.3 0Z" fill="#7673cf" stroke="#fff" stroke-width="0.9"/><rect x="-7.5" y="-4.5" width="15" height="9" rx="1" fill="#fff"/><rect x="-5" y="-2" width="4" height="2.5" fill="#7a72cc"/><rect x="1.5" y="-2" width="3.5" height="2.5" fill="#7a72cc"/><line x1="-8.5" y1="6.5" x2="8.5" y2="6.5" stroke="#fff" stroke-width="1.4"/><line x1="-4" y1="-6.5" x2="-4" y2="-4" stroke="#fff" stroke-width="1.2"/></g></svg>
<div class="t" style="left:328.2px;width:600px;text-align:center;top:698.2px;font-size:16px;line-height:16px;color:#3d3ddc;font-weight:bold;letter-spacing:-0.45px;">Change Style</div>
<div class="t" style="left:1073.6px;top:671.5px;font-size:17.5px;line-height:17.5px;color:#fdfdfd;font-weight:bold;">Overall Energy usage Split - Today (Kwh)</div>
<div class="t" style="left:1281.6px;top:800.0px;font-size:16px;line-height:16px;color:#fcfcfc;font-weight:normal;">3,353.11</div>
<div class="t" style="left:1522.0px;top:790.2px;font-size:16px;line-height:16px;color:#fcfcfc;font-weight:normal;">2,529.19</div>
<div class="t" style="left:415.0px;top:755.0px;font-size:24px;line-height:24px;color:#f7f7f7;font-weight:bold;">07 kWh</div>
<div class="t" style="left:420.0px;top:784.1px;font-size:14px;line-height:14px;color:#fafafa;font-weight:normal;">1 hr</div>
<svg style="left:476px;top:783px" width="12" height="10"><path d="M1.5 8 L6 3 L10.5 8" fill="none" stroke="#f6f6f6" stroke-width="1.5"/></svg>
<div class="t" style="left:489.7px;top:784.1px;font-size:14px;line-height:14px;color:#fafafa;font-weight:normal;">18.95 %</div>
<div class="t" style="right:940.0px;top:235.1px;font-size:16.8px;line-height:16.8px;color:#1e1e1e;font-weight:normal;-webkit-text-stroke:0.2px #1e1e1e;">Widget Name</div>
<div class="t" style="right:940.0px;top:344.2px;font-size:16.8px;line-height:16.8px;color:#1e1e1e;font-weight:normal;-webkit-text-stroke:0.2px #1e1e1e;">Select Module</div>
<div class="t" style="right:940.0px;top:454.1px;font-size:16.8px;line-height:16.8px;color:#1e1e1e;font-weight:normal;-webkit-text-stroke:0.2px #1e1e1e;">Map</div>
<div class="t" style="left:1065.3px;top:235.0px;font-size:16px;line-height:16px;color:#e8434f;font-weight:normal;">*</div>
<div class="t" style="left:1065.3px;top:345.3px;font-size:16px;line-height:16px;color:#e8434f;font-weight:normal;">*</div>
<div class="t" style="left:1065.3px;top:454.3px;font-size:16px;line-height:16px;color:#e8434f;font-weight:normal;">*</div>
<div style="position:absolute;left:1136px;top:218px;width:668px;height:48px;border:1.6px solid #3434d6;border-left:2.5px solid #ea1f2d;border-radius:5px;box-sizing:border-box;box-shadow:0 0 0 2px rgba(70,80,230,0.13);"></div>
<div class="t" style="left:1148.8px;top:235.4px;font-size:16.4px;line-height:16.4px;color:#1a1a1a;font-weight:normal;">Zoho Buildings</div>
<div class="t" style="left:1136.0px;top:272.5px;font-size:14.2px;line-height:14.2px;color:#111;font-weight:normal;-webkit-text-stroke:0.15px #111;">The name of the widget is displayed as its title</div>
<div style="position:absolute;left:1136px;top:323px;width:667px;height:57px;border:1px solid #c9c9c9;border-left:2.5px solid #ea1f2d;border-radius:5px;box-sizing:border-box;"></div>
<div style="position:absolute;left:1148px;top:332px;width:38px;height:38px;background:#eceef3;border-radius:50%;"></div>
<svg style="left:1155px;top:338px" width="26" height="26"><path d="M5.9 12.4 A6.6 6.6 0 1 1 18.9 12.4 L12.4 22.3 Z" fill="#40444c"/><circle cx="12.4" cy="10.6" r="4.4" fill="#eceef3"/></svg>
<div class="t" style="left:1201.0px;top:344.8px;font-size:16.6px;line-height:16.6px;color:#1c1c1c;font-weight:normal;">All Location Models</div>
<svg style="left:1766px;top:344px" width="20" height="14"><path d="M3 3.5 L10 10.5 L17 3.5" fill="none" stroke="#5c6370" stroke-width="1.7"/></svg>
<div style="position:absolute;left:1136px;top:437px;width:667px;height:48px;border:1px solid #c9c9c9;border-left:2.5px solid #ea1f2d;border-radius:5px;box-sizing:border-box;"></div>
<div class="t" style="left:1148.6px;top:453.5px;font-size:16.3px;line-height:16.3px;color:#1c1c1c;font-weight:normal;">Buildings</div>
<svg style="left:1766px;top:454px" width="20" height="14"><path d="M3 3.5 L10 10.5 L17 3.5" fill="none" stroke="#5c6370" stroke-width="1.7"/></svg>
<div style="position:absolute;left:400px;top:1050px;width:1600px;height:1px;background:#d9dbd9;"></div>
<div style="position:absolute;left:1752px;top:1065px;width:90px;height:37px;border:2px solid #5b5bec;border-radius:5px;box-sizing:border-box;background:#fff;"></div>
<div class="t" style="left:1497.3px;width:600px;text-align:center;top:1077.6px;font-size:15.8px;line-height:15.8px;color:#4343d6;font-weight:bold;letter-spacing:-0.3px;">Cancel</div>
<div style="position:absolute;left:1862px;top:1065px;width:100px;height:37px;background:#4545d1;border-radius:5px;"></div>
<div class="t" style="left:1612.3px;width:600px;text-align:center;top:1077.5px;font-size:16px;line-height:16px;color:#fff;font-weight:bold;letter-spacing:-0.35px;">Proceed</div>
</body></html>
